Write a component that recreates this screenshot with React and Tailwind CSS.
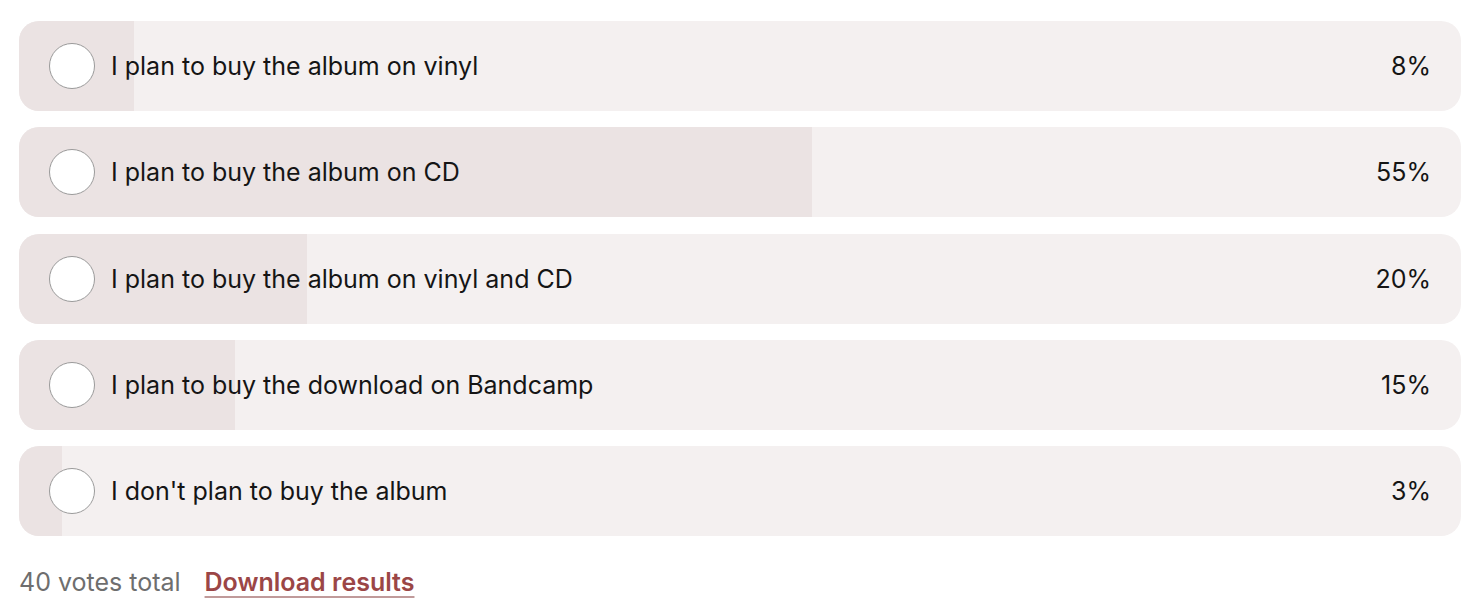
import React from 'react';

const options = [
  { label: 'I plan to buy the album on vinyl', pct: 8 },
  { label: 'I plan to buy the album on CD', pct: 55 },
  { label: 'I plan to buy the album on vinyl and CD', pct: 20 },
  { label: 'I plan to buy the download on Bandcamp', pct: 15 },
  { label: "I don't plan to buy the album", pct: 3 },
];

const PollRow = ({ label, pct }) => (
  <div className="relative h-[90px] rounded-[20px] bg-[#f4f0f0] overflow-hidden">
    {/* result fill */}
    <div className="absolute inset-y-0 left-0 bg-[#ebe3e3]" style={{ width: `${pct}%` }} />
    <div className="relative h-full flex items-center pl-[30px] pr-[30px]">
      <span className="w-[46px] h-[46px] rounded-full bg-white border-[1.5px] border-[#9a9a9a] shrink-0" />
      <span className="ml-[16px] flex-1 text-[25px] text-[#151515] leading-none pt-[1px]">{label}</span>
      <span className="text-[25px] text-[#151515] leading-none pt-[1px]">{pct}%</span>
    </div>
  </div>
);

export default function App() {
  return (
    <div className="bg-white min-h-screen px-[19px] pt-[21px]" style={{ fontFamily: 'Inter, "Liberation Sans", sans-serif' }}>
      <div className="w-[1442px] flex flex-col gap-[16.25px]">
        {options.map((o) => (
          <PollRow key={o.label} {...o} />
        ))}
      </div>
      <div className="flex items-center gap-[24px] mt-[28px] text-[25px]">
        <span className="text-[#6e6e6e]">40 votes total</span>
        <a href="#" className="font-semibold text-[#9b4646] underline decoration-[#c09a9a] decoration-2 underline-offset-[5px]">
          Download results
        </a>
      </div>
    </div>
  );
}
